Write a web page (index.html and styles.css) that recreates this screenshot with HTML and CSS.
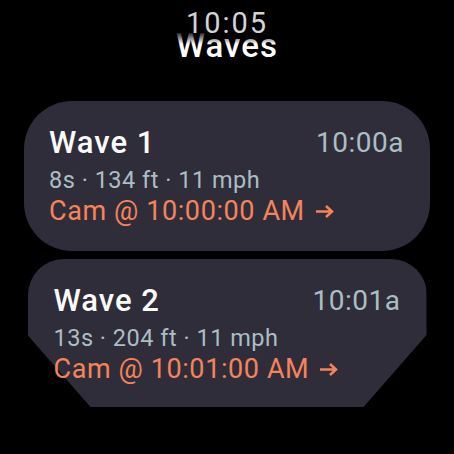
FILE: index.html
```html
<!DOCTYPE html>
<html>
<head>
<meta charset="utf-8">
<link rel="stylesheet" href="styles.css">
</head>
<body>
<div class="screen">
  <div class="list">
    <h1 class="title">Waves</h1>
    <div class="card card-first">
      <div class="row-top">
        <span class="name">Wave 1</span>
        <span class="time">10:00a</span>
      </div>
      <div class="stats">8s · 134 ft · 11 mph</div>
      <div class="cam">Cam @ 10:00:00 AM<svg class="arrow" width="19" height="13" viewBox="0 0 19 13"><path d="M1 6.5H17M11 1L17 6.5L11 12" fill="none" stroke="currentColor" stroke-width="2.5" stroke-linecap="butt" stroke-linejoin="miter"/></svg></div>
    </div>
    <div class="card card-second">
      <div class="row-top">
        <span class="name">Wave 2</span>
        <span class="time">10:01a</span>
      </div>
      <div class="stats">13s · 204 ft · 11 mph</div>
      <div class="cam">Cam @ 10:01:00 AM<svg class="arrow" width="19" height="13" viewBox="0 0 19 13"><path d="M1 6.5H17M11 1L17 6.5L11 12" fill="none" stroke="currentColor" stroke-width="2.5" stroke-linecap="butt" stroke-linejoin="miter"/></svg></div>
    </div>
  </div>
  <div class="clock">10:05</div>
</div>
</body>
</html>
```
FILE: styles.css
```css
html, body {
  margin: 0;
  padding: 0;
  background: #000;
}
.screen {
  position: relative;
  width: 454px;
  height: 454px;
  overflow: hidden;
  background: #000;
  font-family: Roboto, "Noto Sans", sans-serif;
}
.list {
  display: flex;
  flex-direction: column;
  align-items: center;
  padding-top: 28px;
}
.title {
  margin: 0;
  font-size: 33px;
  line-height: 36px;
  font-weight: 500;
  color: #fff;
  letter-spacing: 1px;
}
.card {
  box-sizing: border-box;
  display: flex;
  flex-direction: column;
  position: relative;
  isolation: isolate;
}
.card::before {
  content: "";
  position: absolute;
  inset: 0;
  z-index: -1;
  background: #302d3a;
}
.card-first {
  margin-top: 37px;
  width: 406px;
  height: 150px;
  padding: 24px 26px 0 25px;
}
.card-first::before {
  border-radius: 48px;
}
.card-second {
  margin-top: 8px;
  width: 399px;
  height: 148px;
  padding: 24px 26px 0 26px;
}
.card-second::before {
  border-radius: 36px 36px 0 0;
  clip-path: polygon(0 0, 100% 0, 100% 76px, calc(100% - 63px) 100%, 63px 100%, 0 76px);
}
.row-top {
  display: flex;
  justify-content: space-between;
  align-items: flex-start;
  height: 36px;
}
.name {
  font-size: 31px;
  line-height: 36px;
  font-weight: 500;
  color: #fafafa;
  letter-spacing: 1px;
}
.time {
  font-size: 28px;
  line-height: 36px;
  color: #aabec4;
  letter-spacing: 0.5px;
}
.stats {
  margin-top: 6px;
  font-size: 23.5px;
  line-height: 26px;
  color: #aabec4;
  letter-spacing: 0.5px;
}
.cam {
  margin-top: 3px;
  font-size: 27px;
  line-height: 30px;
  color: #f5845a;
  letter-spacing: 0.6px;
  display: flex;
  align-items: center;
}
.arrow {
  margin-left: 10px;
  margin-top: 1px;
  flex: none;
}
.clock {
  position: absolute;
  top: 0;
  left: 0;
  right: 0;
  height: 44px;
  padding-top: 8px;
  box-sizing: border-box;
  text-align: center;
  font-size: 29px;
  line-height: 30px;
  color: #d2d4d6;
  letter-spacing: 2px;
  background: linear-gradient(to bottom, #000 0, #000 31px, rgba(0,0,0,0) 44px);
}
```
